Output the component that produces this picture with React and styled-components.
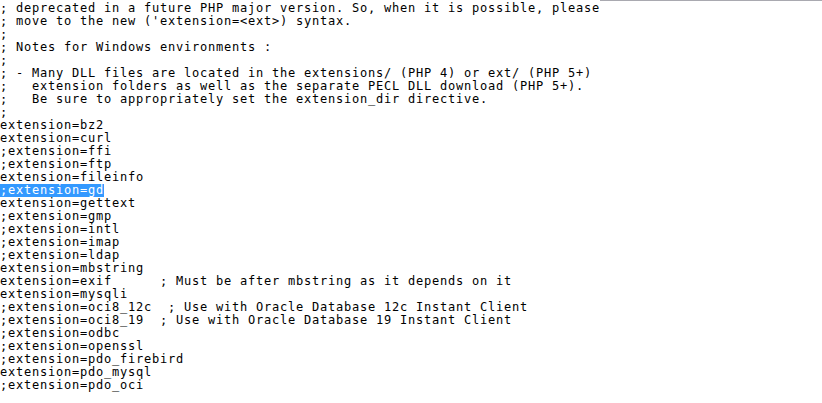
import React from "react";
import styled, { createGlobalStyle } from "styled-components";

const Global = createGlobalStyle`
  html, body { margin: 0; padding: 0; background: #fff; }
  body { overflow: hidden; }
`;

const Window = styled.div`
  width: 822px;
  height: 403px;
  display: flex;
  flex-direction: column;
  background: #fff;
  overflow: hidden;
`;

const TopEdge = styled.div`
  display: flex;
  height: 2px;
  flex: 0 0 2px;
`;

const EdgeSpacer = styled.div`
  flex: 0 0 600px;
`;

const EdgeLine = styled.div`
  flex: 1;
  height: 1px;
  background: #a9a9b0;
`;

const Editor = styled.div`
  font-family: "DejaVu Sans Mono", "Liberation Mono", monospace;
  font-size: 12px;
  letter-spacing: 0.776px;
  line-height: 13px;
  color: #000;
`;

const Line = styled.div`
  white-space: pre;
  height: 13px;
`;

const Selected = styled.span`
  display: inline-block;
  height: 13px;
  line-height: 13px;
  vertical-align: top;
  background: #3399ff;
  color: #fff;
`;

const lines = [
  "; deprecated in a future PHP major version. So, when it is possible, please",
  "; move to the new ('extension=<ext>) syntax.",
  ";",
  "; Notes for Windows environments :",
  ";",
  "; - Many DLL files are located in the extensions/ (PHP 4) or ext/ (PHP 5+)",
  ";   extension folders as well as the separate PECL DLL download (PHP 5+).",
  ";   Be sure to appropriately set the extension_dir directive.",
  ";",
  "extension=bz2",
  "extension=curl",
  ";extension=ffi",
  ";extension=ftp",
  "extension=fileinfo",
  { sel: ";extension=gd" },
  "extension=gettext",
  ";extension=gmp",
  ";extension=intl",
  ";extension=imap",
  ";extension=ldap",
  "extension=mbstring",
  "extension=exif      ; Must be after mbstring as it depends on it",
  "extension=mysqli",
  ";extension=oci8_12c  ; Use with Oracle Database 12c Instant Client",
  ";extension=oci8_19  ; Use with Oracle Database 19 Instant Client",
  ";extension=odbc",
  ";extension=openssl",
  ";extension=pdo_firebird",
  "extension=pdo_mysql",
  ";extension=pdo_oci",
];

export default function App() {
  return (
    <Window>
      <Global />
      <TopEdge>
        <EdgeSpacer />
        <EdgeLine />
      </TopEdge>
      <Editor>
        {lines.map((l, i) => (
          <Line key={i}>
            {typeof l === "string" ? l : <Selected>{l.sel}</Selected>}
          </Line>
        ))}
      </Editor>
    </Window>
  );
}
